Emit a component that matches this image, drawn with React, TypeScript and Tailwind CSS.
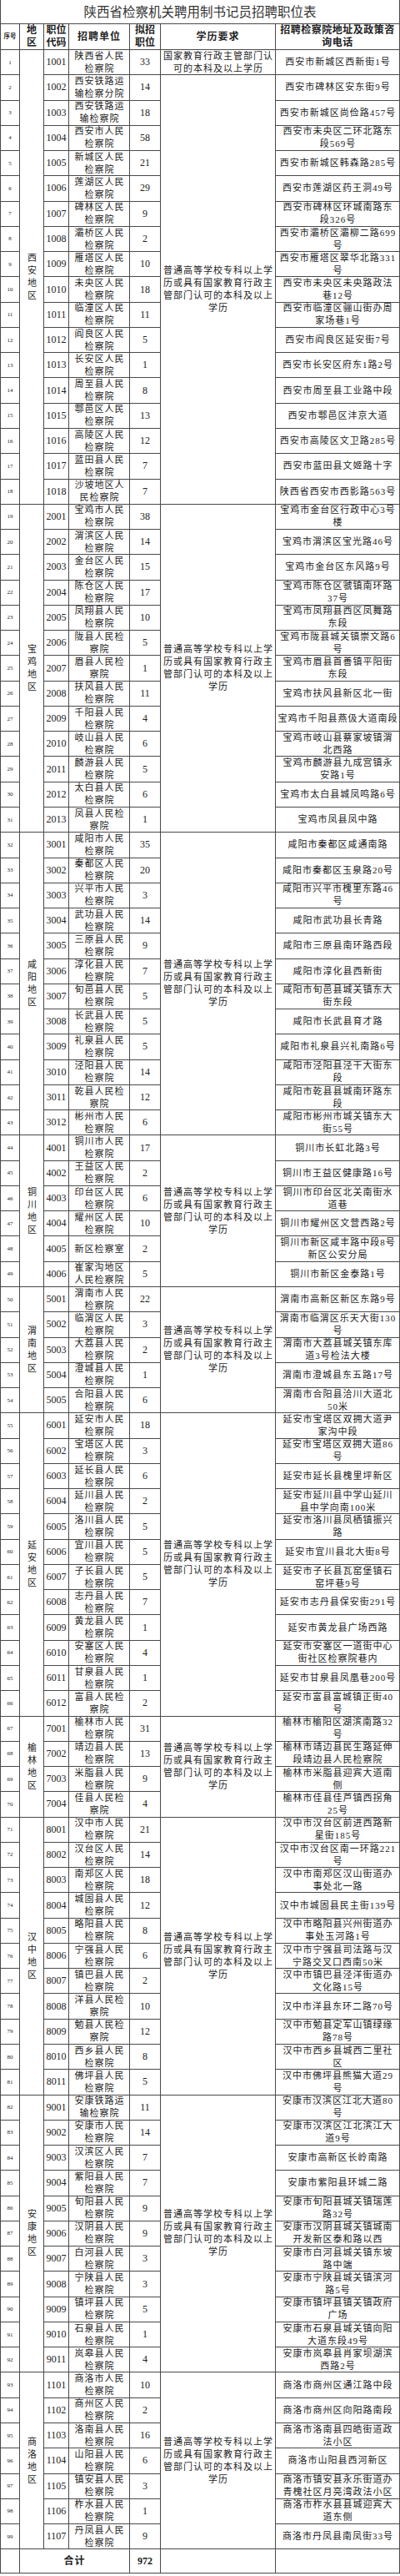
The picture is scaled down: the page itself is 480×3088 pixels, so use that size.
type Row = [string, string, string, string];

interface Region {
  name: string;
  rows: Row[];
}

const EDU = "普通高等学校专科以上学/历或具有国家教育行政主/管部门认可的本科及以上/学历";
const EDU_FIRST = "国家教育行政主管部门认/可的本科及以上学历";

const regions: Region[] = [
  {
    name: "西安地区",
    rows: [
      ["1001", "陕西省人民/检察院", "33", "西安市新城区西新街1号"],
      ["1002", "西安铁路运/输检察分院", "14", "西安市碑林区安东街9号"],
      ["1003", "西安铁路运/输检察院", "18", "西安市新城区尚俭路457号"],
      ["1004", "西安市人民/检察院", "58", "西安市未央区二环北路东/段569号"],
      ["1005", "新城区人民/检察院", "21", "西安市新城区韩森路285号"],
      ["1006", "莲湖区人民/检察院", "29", "西安市莲湖区药王洞49号"],
      ["1007", "碑林区人民/检察院", "9", "西安市碑林区环城南路东/段326号"],
      ["1008", "灞桥区人民/检察院", "2", "西安市灞桥区灞柳二路699/号"],
      ["1009", "雁塔区人民/检察院", "10", "西安市雁塔区翠华北路331/号"],
      ["1010", "未央区人民/检察院", "18", "西安市未央区未央路政法/巷12号"],
      ["1011", "临潼区人民/检察院", "11", "西安市临潼区骊山街办周/家场巷1号"],
      ["1012", "阎良区人民/检察院", "5", "西安市阎良区延安街7号"],
      ["1013", "长安区人民/检察院", "1", "西安市长安区府东1路2号"],
      ["1014", "周至县人民/检察院", "8", "西安市周至县工业路中段"],
      ["1015", "鄠邑区人民/检察院", "13", "西安市鄠邑区沣京大道"],
      ["1016", "高陵区人民/检察院", "12", "西安市高陵区文卫路285号"],
      ["1017", "蓝田县人民/检察院", "7", "西安市蓝田县文姬路十字"],
      ["1018", "沙坡地区人/民检察院", "7", "陕西省西安市西影路563号"],
    ],
  },
  {
    name: "宝鸡地区",
    rows: [
      ["2001", "宝鸡市人民/检察院", "38", "宝鸡市金台区行政中心3号/楼"],
      ["2002", "渭滨区人民/检察院", "14", "宝鸡市渭滨区宝光路46号"],
      ["2003", "金台区人民/检察院", "15", "宝鸡市金台区东风路9号"],
      ["2004", "陈仓区人民/检察院", "17", "宝鸡市陈仓区虢镇南环路/37号"],
      ["2005", "凤翔县人民/检察院", "10", "宝鸡市凤翔县西区凤舞路/东段"],
      ["2006", "陇县人民检/察院", "5", "宝鸡市陇县城关镇崇文路6/号"],
      ["2007", "眉县人民检/察院", "1", "宝鸡市眉县首善镇平阳街/东段"],
      ["2008", "扶风县人民/检察院", "11", "宝鸡市扶风县新区北一街"],
      ["2009", "千阳县人民/检察院", "4", "宝鸡市千阳县燕伋大道南段"],
      ["2010", "岐山县人民/检察院", "6", "宝鸡市岐山县蔡家坡镇渭/北西路"],
      ["2011", "麟游县人民/检察院", "5", "宝鸡市麟游县九成宫镇永/安路1号"],
      ["2012", "太白县人民/检察院", "6", "宝鸡市太白县城凤鸣路6号"],
      ["2013", "凤县人民检/察院", "1", "宝鸡市凤县凤中路"],
    ],
  },
  {
    name: "咸阳地区",
    rows: [
      ["3001", "咸阳市人民/检察院", "35", "咸阳市秦都区咸通南路"],
      ["3002", "秦都区人民/检察院", "20", "咸阳市秦都区玉泉路20号"],
      ["3003", "兴平市人民/检察院", "3", "咸阳市兴平市槐里东路46/号"],
      ["3004", "武功县人民/检察院", "14", "咸阳市武功县长青路"],
      ["3005", "三原县人民/检察院", "9", "咸阳市三原县南环路西段"],
      ["3006", "淳化县人民/检察院", "7", "咸阳市淳化县西新街"],
      ["3007", "旬邑县人民/检察院", "5", "咸阳市旬邑县城关镇东大/街东段"],
      ["3008", "长武县人民/检察院", "5", "咸阳市长武县育才路"],
      ["3009", "礼泉县人民/检察院", "5", "咸阳市礼泉县兴礼南路6号"],
      ["3010", "泾阳县人民/检察院", "14", "咸阳市泾阳县泾干大街东/段"],
      ["3011", "乾县人民检/察院", "12", "咸阳市乾县县城南环路东/段"],
      ["3012", "彬州市人民/检察院", "6", "咸阳市彬州市城关镇东大/街55号"],
    ],
  },
  {
    name: "铜川地区",
    rows: [
      ["4001", "铜川市人民/检察院", "17", "铜川市长虹北路3号"],
      ["4002", "王益区人民/检察院", "2", "铜川市王益区健康路16号"],
      ["4003", "印台区人民/检察院", "6", "铜川市印台区北关南街水/道巷"],
      ["4004", "耀州区人民/检察院", "10", "铜川市耀州区文营西路2号"],
      ["4005", "新区检察室", "2", "铜川市新区咸丰路中段8号/新区公安分局"],
      ["4006", "崔家沟地区/人民检察院", "5", "铜川市新区金泰路1号"],
    ],
  },
  {
    name: "渭南地区",
    rows: [
      ["5001", "渭南市人民/检察院", "22", "渭南市高新区新区东路9号"],
      ["5002", "临渭区人民/检察院", "3", "渭南市临渭区乐天大街130/号"],
      ["5003", "大荔县人民/检察院", "2", "渭南市大荔县城关镇东库/道3号检法大楼"],
      ["5004", "澄城县人民/检察院", "1", "渭南市澄城县东五路17号"],
      ["5005", "合阳县人民/检察院", "6", "渭南市合阳县洽川大道北/50米"],
    ],
  },
  {
    name: "延安地区",
    rows: [
      ["6001", "延安市人民/检察院", "18", "延安市宝塔区双拥大道尹/家沟中段"],
      ["6002", "宝塔区人民/检察院", "3", "延安市宝塔区双拥大道86/号"],
      ["6003", "延长县人民/检察院", "6", "延安市延长县槐里坪新区"],
      ["6004", "延川县人民/检察院", "2", "延安市延川县中学山延川/县中学向南100米"],
      ["6005", "洛川县人民/检察院", "5", "延安市洛川县凤栖镇振兴/路"],
      ["6006", "宜川县人民/检察院", "5", "延安市宜川县北大街8号"],
      ["6007", "子长县人民/检察院", "5", "延安市子长县瓦窑堡镇石/窑坪巷9号"],
      ["6008", "志丹县人民/检察院", "7", "延安市志丹县保安街291号"],
      ["6009", "黄龙县人民/检察院", "1", "延安市黄龙县广场西路"],
      ["6010", "安塞区人民/检察院", "4", "延安市安塞区一道街中心/街社区检察院巷内"],
      ["6011", "甘泉县人民/检察院", "1", "延安市甘泉县凤凰巷200号"],
      ["6012", "富县人民检/察院", "2", "延安市富县富城镇正街40/号"],
    ],
  },
  {
    name: "榆林地区",
    rows: [
      ["7001", "榆林市人民/检察院", "31", "榆林市榆阳区湖滨南路32/号"],
      ["7002", "靖边县人民/检察院", "13", "榆林市靖边县民生路延伸/段靖边县人民检察院"],
      ["7003", "米脂县人民/检察院", "9", "榆林市米脂县迎宾大道南/侧"],
      ["7004", "佳县人民检/察院", "4", "榆林市佳县佳芦镇西拐角/25号"],
    ],
  },
  {
    name: "汉中地区",
    rows: [
      ["8001", "汉中市人民/检察院", "21", "汉中市汉台区前进西路新/星街185号"],
      ["8002", "汉台区人民/检察院", "14", "汉中市汉台区南一环路221/号"],
      ["8003", "南郑区人民/检察院", "18", "汉中市南郑区汉山街道办/事处北一路"],
      ["8004", "城固县人民/检察院", "12", "汉中市城固县民主街139号"],
      ["8005", "略阳县人民/检察院", "8", "汉中市略阳县兴州街道办/事处玉河路1号"],
      ["8006", "宁强县人民/检察院", "6", "汉中市宁强县司法路与汉/宁路交叉口西南50米"],
      ["8007", "镇巴县人民/检察院", "2", "汉中市镇巴县泾洋街道办/文化路15号"],
      ["8008", "洋县人民检/察院", "10", "汉中市洋县东环二路70号"],
      ["8009", "勉县人民检/察院", "12", "汉中市勉县定军山镇绿缘/路78号"],
      ["8010", "西乡县人民/检察院", "8", "汉中市西乡县城西二里社/区"],
      ["8011", "佛坪县人民/检察院", "5", "汉中市佛坪县熊猫大道29/号"],
    ],
  },
  {
    name: "安康地区",
    rows: [
      ["9001", "安康铁路运/输检察院", "11", "安康市汉滨区江北大道80/号"],
      ["9002", "安康市人民/检察院", "14", "安康市汉滨区江北滨江大/道9号"],
      ["9003", "汉滨区人民/检察院", "7", "安康市高新区长岭南路"],
      ["9004", "紫阳县人民/检察院", "7", "安康市紫阳县环城二路"],
      ["9005", "旬阳县人民/检察院", "9", "安康市旬阳县城关镇瑞莲/路32号"],
      ["9006", "汉阴县人民/检察院", "9", "安康市汉阴县城关镇城南/开发新区泰和路以西"],
      ["9007", "白河县人民/检察院", "3", "安康市白河县城关镇东坡/路中端"],
      ["9008", "宁陕县人民/检察院", "3", "安康市宁陕县城关镇滨河/路5号"],
      ["9009", "镇坪县人民/检察院", "5", "安康市镇坪县镇关镇政府/广场"],
      ["9010", "石泉县人民/检察院", "1", "安康市石泉县城关镇向阳/大道东段49号"],
      ["9011", "岚皋县人民/检察院", "4", "安康市岚皋县肖家坝湖滨/西路2号"],
    ],
  },
  {
    name: "商洛地区",
    rows: [
      ["1101", "商洛市人民/检察院", "10", "商洛市商州区通江路中段"],
      ["1102", "商州区人民/检察院", "2", "商洛市商州区向阳路南段"],
      ["1103", "洛南县人民/检察院", "16", "商洛市洛南县四皓街道政/法小区"],
      ["1104", "山阳县人民/检察院", "6", "商洛市山阳县西河新区"],
      ["1105", "镇安县人民/检察院", "3", "商洛市镇安县永乐街道办/青槐社区月亮湾政法小区"],
      ["1106", "柞水县人民/检察院", "1", "商洛市柞水县县城迎宾大/道东侧"],
      ["1107", "丹凤县人民/检察院", "9", "商洛市丹凤县南凤街33号"],
    ],
  },
];

const SPAN: Record<number, string> = {
  1: "row-span-1",
  4: "row-span-[4]",
  5: "row-span-[5]",
  6: "row-span-[6]",
  7: "row-span-[7]",
  11: "row-span-[11]",
  12: "row-span-[12]",
  13: "row-span-[13]",
  17: "row-span-[17]",
  18: "row-span-[18]",
};

const cellBase =
  "border-r border-b border-[#4a4a4a] flex flex-col items-center justify-center text-center overflow-hidden";

function Lines({ text, className = "" }: { text: string; className?: string }) {
  return (
    <>
      {text.split("/").map((l, i) => (
        <div key={i} className={className}>
          {l}
        </div>
      ))}
    </>
  );
}

export default function App() {
  const cells: JSX.Element[] = [];
  let idx = 0;
  regions.forEach((reg, ri) => {
    const n = reg.rows.length;
    reg.rows.forEach((r, i) => {
      idx++;
      const k = `r${idx}`;
      cells.push(
        <div key={k + "a"} className={`${cellBase} text-[7px] leading-[8px]`}>
          {idx}
        </div>
      );
      if (i === 0) {
        cells.push(
          <div
            key={k + "b"}
            className={`${cellBase} ${SPAN[n]} text-[11px] leading-[15px] pl-[1px]`}
          >
            {reg.name.split("").map((c, j) => (
              <div key={j}>{c}</div>
            ))}
          </div>
        );
      }
      cells.push(
        <div key={k + "c"} className={`${cellBase} text-[12px] leading-[15px]`}>
          {r[0]}
        </div>
      );
      cells.push(
        <div
          key={k + "d"}
          className={`${cellBase} text-[11px] leading-[15px] tracking-[1px] pl-[1px]`}
        >
          <Lines text={r[1]} className="whitespace-nowrap" />
        </div>
      );
      cells.push(
        <div key={k + "e"} className={`${cellBase} text-[12px] leading-[15px]`}>
          {r[2]}
        </div>
      );
      if (ri === 0) {
        if (i === 0) {
          cells.push(
            <div
              key={k + "f"}
              className={`${cellBase} ${SPAN[1]} text-[11px] leading-[15px] tracking-[1px] pl-[1px]`}
            >
              <Lines text={EDU_FIRST} className="whitespace-nowrap" />
            </div>
          );
        } else if (i === 1) {
          cells.push(
            <div
              key={k + "f"}
              className={`${cellBase} ${SPAN[n - 1]} text-[11px] leading-[15px] tracking-[1px] pl-[1px]`}
            >
              <Lines text={EDU} className="whitespace-nowrap" />
            </div>
          );
        }
      } else if (i === 0) {
        cells.push(
          <div
            key={k + "f"}
            className={`${cellBase} ${SPAN[n]} text-[11px] leading-[15px] tracking-[1px] pl-[1px]`}
          >
            <Lines text={EDU} className="whitespace-nowrap" />
          </div>
        );
      }
      cells.push(
        <div
          key={k + "g"}
          className={`${cellBase} text-[11px] leading-[15px] tracking-[1px] pl-[1px]`}
        >
          <Lines text={r[3]} className="whitespace-nowrap" />
        </div>
      );
    });
  });

  return (
    <div className="w-[480px] h-[3088px] bg-white text-[#222] font-['Liberation_Serif','Noto_Sans_CJK_SC',serif]">
      <div className="w-[479px] grid grid-cols-[23px_29px_30px_73px_37px_138px_149px] grid-rows-[29px_31px_repeat(99,30.27px)_29px] border-l border-[#4a4a4a]">
        <div className="col-span-7 border-r border-b border-[#4a4a4a] flex items-center justify-center text-[15.5px] text-[#333] tracking-[0px] font-['Noto_Sans_CJK_SC',sans-serif]">
          陕西省检察机关聘用制书记员招聘职位表
        </div>
        <div className={`${cellBase} text-[7.5px] font-bold`}>序号</div>
        <div className={`${cellBase} text-[12px] leading-[15px] font-bold`}>
          <div>地</div>
          <div>区</div>
        </div>
        <div className={`${cellBase} text-[12px] leading-[15px] font-bold`}>
          <div>职位</div>
          <div>代码</div>
        </div>
        <div className={`${cellBase} text-[12px] leading-[15px] font-bold tracking-[1px]`}>
          招聘单位
        </div>
        <div className={`${cellBase} text-[12px] leading-[15px] font-bold`}>
          <div>拟招</div>
          <div>职位</div>
        </div>
        <div className={`${cellBase} text-[12px] leading-[15px] font-bold tracking-[1px]`}>
          学历要求
        </div>
        <div className={`${cellBase} text-[12px] leading-[15px] font-bold tracking-[0.5px]`}>
          <div className="whitespace-nowrap">招聘检察院地址及政策咨</div>
          <div>询电话</div>
        </div>
        {cells}
        <div className={cellBase}></div>
        <div className={`${cellBase} col-span-3 text-[12px] font-bold tracking-[1px]`}>
          合计
        </div>
        <div className={`${cellBase} text-[12px] font-bold`}>972</div>
        <div className={cellBase}></div>
        <div className={cellBase}></div>
      </div>
    </div>
  );
}
